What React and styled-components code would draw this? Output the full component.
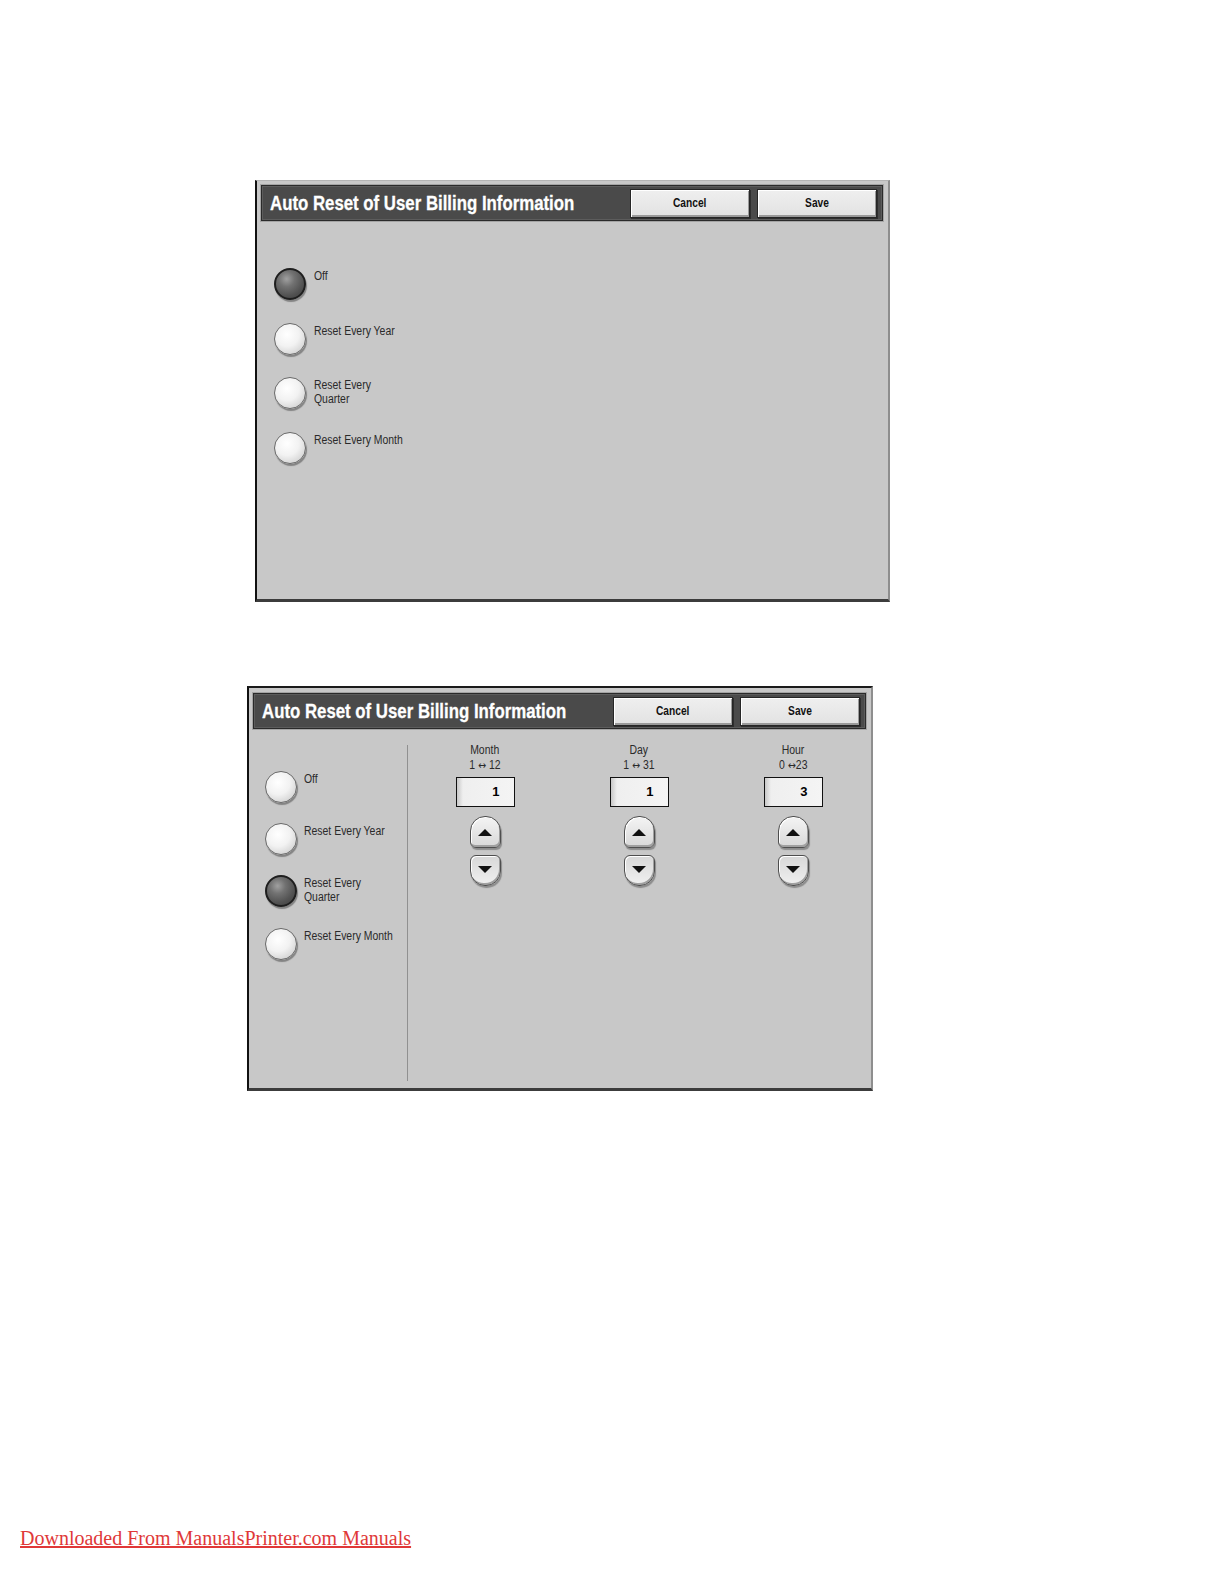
import styled, { createGlobalStyle } from "styled-components";

const GlobalStyle = createGlobalStyle`
  html, body {
    margin: 0;
    padding: 0;
    background: #ffffff;
  }
  body {
    font-family: "Liberation Sans", Arial, sans-serif;
  }
`;

const options = [
  { id: "off", lines: ["Off"] },
  { id: "year", lines: ["Reset Every Year"] },
  { id: "quarter", lines: ["Reset Every", "Quarter"] },
  { id: "month", lines: ["Reset Every Month"] },
];

const spinners = [
  { label: "Month", from: "1 ", to: " 12", value: 1 },
  { label: "Day", from: "1 ", to: " 31", value: 1 },
  { label: "Hour", from: "0 ", to: "23", value: 3 },
];

function Header() {
  return (
    <TitleBar>
      <Title>
        <span>Auto Reset of User Billing Information</span>
      </Title>
      <HeadButton>
        <span>Cancel</span>
      </HeadButton>
      <HeadButton>
        <span>Save</span>
      </HeadButton>
    </TitleBar>
  );
}

function RadioList({ selected, rowHeight, labelGap }) {
  return (
    <List>
      {options.map((o) => (
        <RadioRow key={o.id} $height={rowHeight}>
          <Radio $on={selected === o.id} />
          <RadioLabel $gap={labelGap}>
            {o.lines.map((l) => (
              <span key={l}>{l}</span>
            ))}
          </RadioLabel>
        </RadioRow>
      ))}
    </List>
  );
}

export default function App() {
  return (
    <>
      <GlobalStyle />
      <Page>
        <Panel $left={255} $width={635} $height={422} $inset={4}>
          <Header />
          <SimpleBody>
            <RadioList selected="off" rowHeight={54.6} labelGap={8} />
          </SimpleBody>
        </Panel>

        <Panel
          $left={247}
          $width={626}
          $height={405}
          $top={84}
          $inset={5}
          $darkTop
        >
          <Header />
          <SplitBody>
            <LeftColumn>
              <RadioList selected="quarter" rowHeight={52.2} labelGap={7} />
            </LeftColumn>
            <Spinners>
              {spinners.map((s) => (
                <SpinColumn key={s.label}>
                  <SpinLabel>
                    <span>{s.label}</span>
                    <span>
                      {s.from}
                      <RangeArrow>↔</RangeArrow>
                      {s.to}
                    </span>
                  </SpinLabel>
                  <Field>{s.value}</Field>
                  <StepButton $dir="up">
                    <Arrow $dir="up" />
                  </StepButton>
                  <StepButton $dir="down">
                    <Arrow $dir="down" />
                  </StepButton>
                </SpinColumn>
              ))}
            </Spinners>
          </SplitBody>
        </Panel>

        <Footer href="#">Downloaded From ManualsPrinter.com Manuals</Footer>
      </Page>
    </>
  );
}

const Page = styled.div`
  width: 1224px;
  height: 1584px;
  box-sizing: border-box;
  padding-top: 180px;
  display: flex;
  flex-direction: column;
  align-items: flex-start;
`;

const Panel = styled.section`
  box-sizing: border-box;
  width: ${(p) => p.$width}px;
  height: ${(p) => p.$height}px;
  margin-left: ${(p) => p.$left}px;
  margin-top: ${(p) => p.$top || 0}px;
  background: #c8c8c8;
  border-left: 2px solid #111;
  border-top: ${(p) => (p.$darkTop ? "2px solid #1a1a1a" : "1px solid #b4b4b4")};
  border-right: 2px solid #8e8e8e;
  border-bottom: 3px solid #3c3c3c;
  padding: ${(p) => p.$inset}px 5px 0 4px;
  display: flex;
  flex-direction: column;
`;

const TitleBar = styled.header`
  box-sizing: border-box;
  height: 36px;
  flex-shrink: 0;
  display: flex;
  align-items: center;
  gap: 7px;
  padding: 0 5px 0 8px;
  background: #4a4a4a;
  border: 1px solid #2a2a2a;
  box-shadow: 0 0 0 1px #a4a4a4, inset 0 0 0 1px #5c5c5c;
`;

const Title = styled.h1`
  flex: 1;
  min-width: 0;
  margin: 0;
  white-space: nowrap;
  color: #ffffff;
  font-family: "Liberation Sans", Arial, sans-serif;
  font-weight: 700;
  font-size: 21px;
  line-height: 22px;
  -webkit-text-stroke: 0.3px #ffffff;

  span {
    display: inline-block;
    transform: scaleX(0.8);
    transform-origin: left center;
  }
`;

const HeadButton = styled.button`
  box-sizing: border-box;
  width: 120px;
  height: 29px;
  padding: 0;
  flex-shrink: 0;
  background: linear-gradient(#efefef, #e2e2e2);
  border: 1px solid #262626;
  box-shadow: inset 1px 1px 0 #ffffff, inset -1px -2px 0 #9a9a9a,
    1px 1px 0 #2e2e2e;
  color: #111;
  font-family: "Liberation Sans", Arial, sans-serif;
  font-weight: 700;
  font-size: 12px;

  span {
    display: inline-block;
    transform: scaleX(0.85);
  }
`;

const SimpleBody = styled.div`
  padding: 47px 0 0 13px;
`;

const SplitBody = styled.div`
  flex: 1;
  display: flex;
  padding-bottom: 7px;
`;

const LeftColumn = styled.div`
  box-sizing: border-box;
  width: 155px;
  flex-shrink: 0;
  margin-top: 15.5px;
  padding: 26.5px 0 0 12px;
  border-right: 1px solid #909090;
`;

const List = styled.div`
  display: flex;
  flex-direction: column;
`;

const RadioRow = styled.div`
  display: flex;
  align-items: flex-start;
  height: ${(p) => p.$height}px;
`;

const Radio = styled.span`
  box-sizing: border-box;
  width: 32px;
  height: 32px;
  flex-shrink: 0;
  border-radius: 50%;
  border: ${(p) => (p.$on ? "2px solid #1e1e1e" : "1px solid #6a6a6a")};
  background: ${(p) =>
    p.$on
      ? "radial-gradient(circle at 38% 32%, #a0a0a0 0, #727272 30%, #525252 65%, #3a3a3a 100%)"
      : "radial-gradient(circle at 40% 35%, #ffffff 0, #f2f2f2 45%, #d4d4d4 80%, #a8a8a8 100%)"};
  box-shadow: 1px 2px 1px rgba(0, 0, 0, 0.35);
`;

const RadioLabel = styled.div`
  margin-left: ${(p) => p.$gap}px;
  margin-top: 1px;
  display: flex;
  flex-direction: column;
  color: #2a2a2a;
  font-family: "Liberation Sans", Arial, sans-serif;
  font-size: 12px;
  line-height: 14px;
  white-space: nowrap;

  span {
    display: inline-block;
    transform: scaleX(0.87);
    transform-origin: left center;
  }
`;

const Spinners = styled.div`
  flex: 1;
  display: grid;
  grid-template-columns: repeat(3, 154px);
  align-items: start;
  padding-top: 14px;
`;

const SpinColumn = styled.div`
  display: flex;
  flex-direction: column;
  align-items: center;
`;

const SpinLabel = styled.div`
  display: flex;
  flex-direction: column;
  align-items: center;
  color: #2a2a2a;
  font-family: "Liberation Sans", Arial, sans-serif;
  font-size: 12px;
  line-height: 15px;
  white-space: pre;

  > span {
    display: inline-block;
    transform: scaleX(0.87);
  }
`;

const RangeArrow = styled.span`
  font-family: "DejaVu Sans", sans-serif;
  font-size: 11px;
`;

const Field = styled.div`
  box-sizing: border-box;
  width: 59px;
  height: 30.5px;
  margin-top: 3.5px;
  padding-right: 14px;
  display: flex;
  align-items: center;
  justify-content: flex-end;
  background: linear-gradient(90deg, #c8c8c8 0, #efefef 6px, #f4f4f4 100%);
  border: 1px solid #111;
  color: #000;
  font-family: "Liberation Sans", Arial, sans-serif;
  font-weight: 700;
  font-size: 13px;
`;

const StepButton = styled.div`
  box-sizing: border-box;
  width: 31px;
  height: ${(p) => (p.$dir === "up" ? 32 : 31.5)}px;
  margin-top: ${(p) => (p.$dir === "up" ? 9 : 6.5)}px;
  display: flex;
  align-items: center;
  justify-content: center;
  background: ${(p) =>
    p.$dir === "up"
      ? "linear-gradient(#f4f4f4, #d8d8d8)"
      : "linear-gradient(#d8d8d8, #f0f0f0)"};
  border: 1px solid #4e4e4e;
  border-radius: ${(p) =>
    p.$dir === "up" ? "15px 15px 6px 6px" : "6px 6px 15px 15px"};
  box-shadow: inset -1px -2px 0 #a0a0a0, inset 1px 1px 0 #ffffff,
    1px 2px 1px rgba(0, 0, 0, 0.3);
`;

const Arrow = styled.span`
  width: 0;
  height: 0;
  border-left: 7px solid transparent;
  border-right: 7px solid transparent;
  ${(p) =>
    p.$dir === "up"
      ? "border-bottom: 7px solid #111; margin-top: 1px;"
      : "border-top: 7px solid #111; margin-top: -1px;"}
`;

const Footer = styled.a`
  margin-top: 436px;
  margin-left: 20px;
  color: #e03838;
  font-family: "Liberation Serif", "Times New Roman", serif;
  font-size: 20px;
  line-height: 22px;
  text-decoration: underline;
`;
